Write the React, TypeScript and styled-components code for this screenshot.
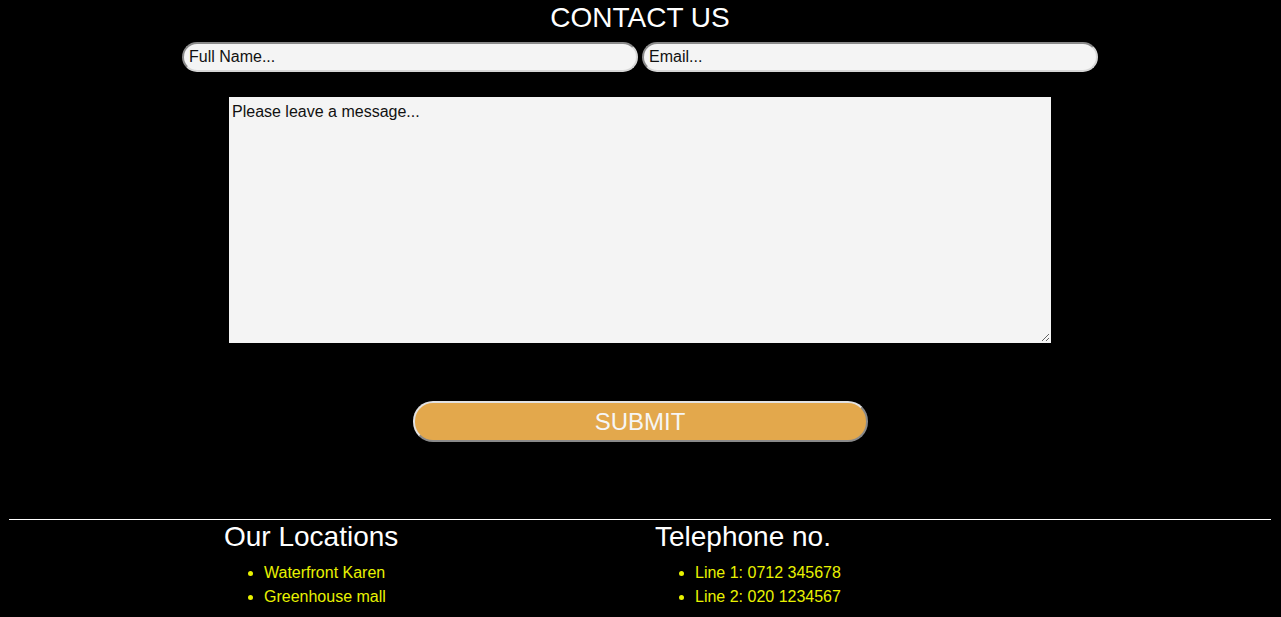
import React from "react";
import styled, { createGlobalStyle } from "styled-components";

const Global = createGlobalStyle`
  html, body { margin: 0; padding: 0; background: #000; }
  body { font-family: "Liberation Sans", Arial, sans-serif; color: #fff; }
  * { box-sizing: border-box; }
`;

const Page = styled.div`
  display: flex;
  flex-direction: column;
  min-height: 617px;
  background: #000;
`;

const Form = styled.form`
  display: flex;
  flex-direction: column;
  align-items: center;
  padding-right: 1px;
`;

const Title = styled.h1`
  margin: 2px 0 0;
  font-size: 28px;
  line-height: 32px;
  font-weight: 400;
  color: #fff;
  text-align: center;
`;

const InputRow = styled.div`
  display: flex;
  justify-content: center;
  gap: 4px;
  margin-top: 8px;
`;

const TextInput = styled.input`
  width: 456px;
  height: 30px;
  padding: 0 5px;
  border-radius: 15px;
  border: 2px solid;
  border-color: #8a8a8a #d6d6d6 #d6d6d6 #8a8a8a;
  background: #f4f4f4;
  font-family: "Liberation Sans", Arial, sans-serif;
  font-size: 16px;
  color: #000;
  outline: none;
  &::placeholder { color: #111; opacity: 1; }
`;

const Message = styled.textarea`
  width: 822px;
  height: 246px;
  margin-top: 25px;
  padding: 5px 2px 2px;
  border: 1px solid #f4f4f4;
  background: #f4f4f4;
  font-family: "Liberation Sans", Arial, sans-serif;
  font-size: 16px;
  line-height: 18px;
  color: #000;
  outline: none;
  &::placeholder { color: #111; opacity: 1; }
`;

const Submit = styled.button`
  width: 455px;
  height: 41px;
  margin-top: 58px;
  border-radius: 20px;
  border: 2px solid;
  border-color: #e2e2e2 #8a8a8a #8a8a8a #e2e2e2;
  background: #e3a84c;
  color: #f6f6f6;
  font-family: "Liberation Sans", Arial, sans-serif;
  font-size: 24px;
  line-height: 1;
  padding: 0;
  cursor: pointer;
`;

const Rule = styled.hr`
  margin: 77px 10px 0 9px;
  border: none;
  border-top: 1px solid #fff;
  height: 0;
`;

const Footer = styled.footer`
  display: flex;
  padding-left: 224px;
  margin-top: 1px;
`;

const Column = styled.section<{ $width: number }>`
  width: ${(p) => p.$width}px;
`;

const ColumnTitle = styled.h2`
  margin: 0;
  font-size: 28px;
  line-height: 32px;
  font-weight: 400;
  color: #fff;
`;

const List = styled.ul`
  margin: 8px 0 0;
  padding-left: 40px;
  color: #e8f200;
`;

const Item = styled.li`
  font-size: 16px;
  line-height: 24px;
`;

export default function App() {
  return (
    <Page>
      <Global />
      <Form onSubmit={(e) => e.preventDefault()}>
        <Title>CONTACT US</Title>
        <InputRow>
          <TextInput type="text" placeholder="Full Name..." />
          <TextInput type="email" placeholder="Email..." />
        </InputRow>
        <Message placeholder="Please leave a message..." />
        <Submit type="submit">SUBMIT</Submit>
      </Form>
      <Rule />
      <Footer>
        <Column $width={431}>
          <ColumnTitle>Our Locations</ColumnTitle>
          <List>
            <Item>Waterfront Karen</Item>
            <Item>Greenhouse mall</Item>
          </List>
        </Column>
        <Column $width={400}>
          <ColumnTitle>Telephone no.</ColumnTitle>
          <List>
            <Item>Line 1: 0712 345678</Item>
            <Item>Line 2: 020 1234567</Item>
          </List>
        </Column>
      </Footer>
    </Page>
  );
}
